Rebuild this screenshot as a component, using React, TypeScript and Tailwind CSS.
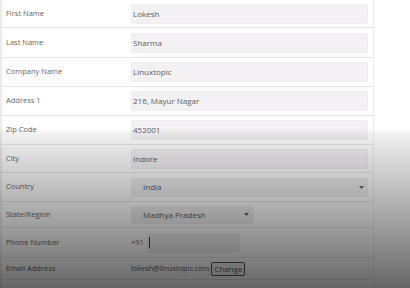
const rows = [
  { label: "First Name", value: "Lokesh", h: "h-[28px]", kind: "text" },
  { label: "Last Name", value: "Sharma", h: "h-[30px]", kind: "text" },
  { label: "Company Name", value: "Linuxtopic", h: "h-[29px]", kind: "text" },
  { label: "Address 1", value: "216, Mayur Nagar", h: "h-[29px]", kind: "text" },
  { label: "Zip Code", value: "452001", h: "h-[29px]", kind: "text" },
  { label: "City", value: "Indore", h: "h-[28px]", kind: "text" },
  { label: "Country", value: "India", h: "h-[29px]", kind: "select" },
  { label: "State/Region", value: "Madhya Pradesh", h: "h-[26px]", kind: "selectSmall" },
  { label: "Phone Number", value: "", h: "h-[30px]", kind: "phone" },
  { label: "Email Address", value: "lokesh@linuxtopic.com", h: "h-[22px]", kind: "email" },
];

const Caret = () => (
  <svg width="5" height="3" viewBox="0 0 5 3" className="shrink-0">
    <path d="M0 0h5L2.5 3z" fill="#666" />
  </svg>
);

const Field = ({ kind, value }: { kind: string; value: string }) => {
  if (kind === "select") {
    return (
      <div className="flex h-[19px] w-[237px] items-center justify-between rounded-[2px] bg-[#f1eff1] pl-[12px] pr-[4px] text-[8px]">
        <span>{value}</span>
        <Caret />
      </div>
    );
  }
  if (kind === "selectSmall") {
    return (
      <div className="flex h-[18px] w-[123px] items-center justify-between rounded-[2px] bg-[#f1eff1] pl-[12px] pr-[5px] text-[8px]">
        <span>{value}</span>
        <Caret />
      </div>
    );
  }
  if (kind === "phone") {
    return (
      <div className="flex items-center text-[7.5px]">
        <span className="w-[16px]">+91</span>
        <div className="flex h-[20px] w-[93px] items-center rounded-[2px] bg-[#f1eff1] pl-[2px]">
          <span className="h-[11px] w-px bg-[#444]" />
        </div>
      </div>
    );
  }
  if (kind === "email") {
    return (
      <div className="flex items-center gap-[2px] text-[7.3px]">
        <span>{value}</span>
        <span className="flex h-[14px] w-[34px] items-center justify-center rounded-[2px] border border-[#555] bg-[#f7f7f7] text-[8px]">Change</span>
      </div>
    );
  }
  return (
    <div className="flex h-[20px] w-[237px] items-center rounded-[2px] border border-[#efedef] bg-[#f3f1f3] pl-[1px] text-[8px]">
      {value}
    </div>
  );
};

const App = () => {
  return (
    <div className="relative h-[288px] w-[410px] overflow-hidden bg-white font-['Open_Sans',sans-serif] text-[#5c5c5c]">
      <div className="h-full w-[374px] border-l-2 border-r border-[#ececec]">
        {rows.map(row => (
          <div key={row.label} className={`flex items-center border-b border-[#e6e6e6] ${row.h}`}>
            <div className="w-[129px] pl-[4px] text-[7.5px] text-[#666]">{row.label}</div>
            <Field kind={row.kind} value={row.value} />
          </div>
        ))}
        <div className="h-[12px]" />
      </div>
      {/* darkening fade over the lower half */}
      <div className="pointer-events-none absolute inset-0 bg-[linear-gradient(to_bottom,transparent_0px,transparent_128px,rgba(0,0,0,0.06)_134px,rgba(0,0,0,0.6)_288px)]" />
    </div>
  );
};

export default App;
